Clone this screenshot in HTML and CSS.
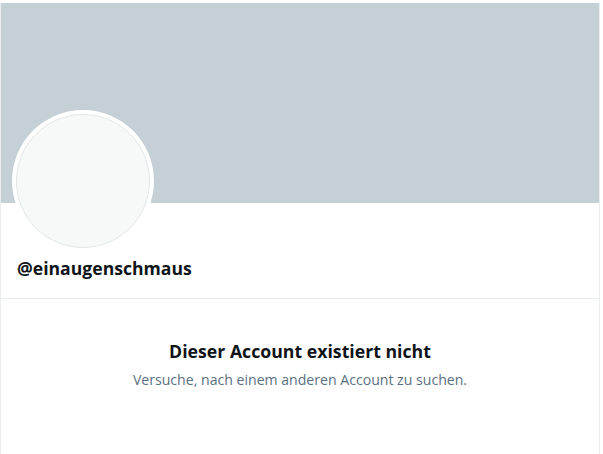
FILE: index.html
```html
<!DOCTYPE html>
<html lang="de">
<head>
<meta charset="utf-8">
<link rel="stylesheet" href="styles.css">
</head>
<body>
<main class="column">
  <section class="profile">
    <div class="banner"></div>
    <div class="info">
      <div class="avatar"><div class="avatar-inner"></div></div>
      <div class="handle">@einaugenschmaus</div>
    </div>
  </section>
  <section class="empty">
    <h2 class="title">Dieser Account existiert nicht</h2>
    <p class="sub">Versuche, nach einem anderen Account zu suchen.</p>
  </section>
</main>
</body>
</html>
```
FILE: styles.css
```css
html, body {
  margin: 0;
  padding: 0;
  background: #ffffff;
}
body {
  font-family: "Open Sans", "Noto Sans", "Liberation Sans", sans-serif;
  color: #0f1419;
  padding-top: 3px;
}
.column {
  width: 598px;
  border-left: 1px solid #ebeef0;
  border-right: 1px solid #ebeef0;
  min-height: 460px;
}
.profile {
  border-bottom: 1px solid #ebeef0;
}
.banner {
  height: 200px;
  background: #c4cfd6;
}
.info {
  position: relative;
  padding: 55px 16px 19px;
}
.avatar {
  position: absolute;
  left: 11px;
  top: -93px;
  width: 134px;
  height: 134px;
  border-radius: 50%;
  background: #ffffff;
  padding: 4px;
}
.avatar-inner {
  width: 132px;
  height: 132px;
  border-radius: 50%;
  background: #f7f9f9;
  border: 1px solid #e3e6e8;
}
.handle {
  font-weight: 700;
  font-size: 17.6px;
  line-height: 21px;
  color: #0f1419;
}
.empty {
  padding-top: 40px;
  text-align: center;
}
.title {
  margin: 0;
  font-size: 17.7px;
  line-height: 24px;
  font-weight: 700;
  color: #0f1419;
}
.sub {
  margin: 8px 0 0;
  font-size: 14.1px;
  line-height: 18px;
  color: #5b7083;
}
```
